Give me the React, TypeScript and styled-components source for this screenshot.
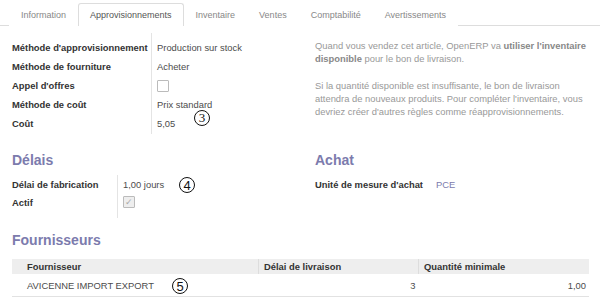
import React from "react";
import styled, { createGlobalStyle } from "styled-components";

const Global = createGlobalStyle`
  body {
    margin: 0;
    background: #fff;
    font-family: "Liberation Sans", Arial, sans-serif;
    font-size: 9.4px;
    color: #4c4c4c;
  }
`;

const Page = styled.div`
  width: 600px;
  height: 306px;
  overflow: hidden;
`;

const TabBar = styled.div`
  display: flex;
  align-items: flex-end;
  height: 25px;
  padding-left: 9px;
  border-bottom: 1px solid #ddd;
  box-sizing: content-box;
`;

const Tab = styled.div<{ active?: boolean }>`
  height: 23px;
  line-height: 22px;
  padding: 0 11px;
  font-size: 9px;
  color: ${p => (p.active ? "#555" : "#888")};
  background: #fff;
  border: 1px solid ${p => (p.active ? "#ddd" : "transparent")};
  border-bottom: none;
  border-radius: 3px 3px 0 0;
  margin-bottom: -1px;
  box-sizing: border-box;
`;

const Body = styled.div`
  padding: 0 11px 0 12px;
`;

const Columns = styled.div<{ top: number }>`
  display: grid;
  grid-template-columns: 303px 1fr;
  padding-top: ${p => p.top}px;
`;

const FieldTable = styled.div<{ labelWidth: number; rowHeight: number; top?: number }>`
  display: grid;
  grid-template-columns: ${p => p.labelWidth}px 1fr;
  grid-auto-rows: ${p => p.rowHeight}px;
  margin-top: ${p => p.top || 0}px;
  position: relative;
`;

const Sep = styled.div<{ left: number; top: number; bottom: number }>`
  position: absolute;
  left: ${p => p.left}px;
  top: ${p => p.top}px;
  bottom: ${p => p.bottom}px;
  border-left: 1px solid #e4e4e4;
`;

const Label = styled.div`
  font-weight: bold;
  color: #333;
  display: flex;
  align-items: center;
  white-space: nowrap;
`;

const Value = styled.div<{ accent?: boolean }>`
  display: flex;
  align-items: center;
  padding-left: 6px;
  color: ${p => (p.accent ? "#7c7bad" : "#4c4c4c")};
  position: relative;
  white-space: nowrap;
`;

const Check = styled.span<{ disabled?: boolean }>`
  width: 10px;
  height: 10px;
  border: 1px solid #bbb;
  border-radius: 1px;
  background: ${p => (p.disabled ? "#eee" : "#fff")};
  display: inline-flex;
  align-items: center;
  justify-content: center;
  color: #aaa;
  font-size: 9px;
  line-height: 1;
`;

const Help = styled.div`
  color: #999;
  line-height: 13px;
  margin-top: 1px;
  white-space: nowrap;
  p {
    margin: 0 0 14px;
  }
  b {
    color: #888;
  }
`;

const Heading = styled.h2<{ top?: number }>`
  margin: ${p => p.top || 0}px 0 0;
  font-size: 14px;
  font-weight: bold;
  color: #7c7bad;
  line-height: 20px;
`;

const Badge = styled.span<{ x: number; y: number; serif?: boolean }>`
  position: absolute;
  left: ${p => p.x}px;
  top: ${p => p.y}px;
  width: 16px;
  height: 16px;
  border: 1.2px solid #111;
  border-radius: 50%;
  display: flex;
  align-items: center;
  justify-content: center;
  font-family: ${p => (p.serif ? '"Liberation Serif", serif' : '"Liberation Sans", sans-serif')};
  font-size: 13px;
  color: #111;
  box-sizing: border-box;
`;

const Table = styled.table`
  width: 577px;
  border-collapse: collapse;
  margin-top: 9px;
  th {
    background: #eee;
    color: #333;
    font-weight: bold;
    text-align: left;
    height: 15px;
    padding: 0 5px;
    border-left: 1px solid #ddd;
  }
  th:first-child {
    border-left: none;
    padding-left: 15px;
  }
  td {
    height: 22px;
    padding: 0 3px;
    border-bottom: 1px solid #e2e2e2;
    color: #4c4c4c;
  }
  td:first-child {
    padding-left: 15px;
    position: relative;
  }
`;

const Num = styled.td`
  text-align: right;
`;

export default function App() {
  return (
    <Page>
      <Global />
      <TabBar>
        <Tab>Information</Tab>
        <Tab active>Approvisionnements</Tab>
        <Tab>Inventaire</Tab>
        <Tab>Ventes</Tab>
        <Tab>Comptabilité</Tab>
        <Tab>Avertissements</Tab>
      </TabBar>
      <Body>
        <Columns top={12}>
          <FieldTable labelWidth={139} rowHeight={19}>
            <Sep left={139} top={-5} bottom={-1} />
            <Label>Méthode d'approvisionnement</Label>
            <Value>Production sur stock</Value>
            <Label>Méthode de fourniture</Label>
            <Value>Acheter</Value>
            <Label>Appel d'offres</Label>
            <Value><Check /></Value>
            <Label>Méthode de coût</Label>
            <Value>Prix standard</Value>
            <Label>Coût</Label>
            <Value>
              5,05
              <Badge x={43} y={-4} serif>3</Badge>
            </Value>
          </FieldTable>
          <Help>
            <p>
              Quand vous vendez cet article, OpenERP va <b>utiliser l'inventaire</b>
              <br />
              <b>disponible</b> pour le bon de livraison.
            </p>
            <p>
              Si la quantité disponible est insuffisante, le bon de livraison
              <br />
              attendra de nouveaux produits. Pour compléter l'inventaire, vous
              <br />
              devriez créer d'autres règles comme réapprovisionnements.
            </p>
          </Help>
        </Columns>

        <Columns top={0}>
          <div>
            <Heading top={17}>Délais</Heading>
            <FieldTable labelWidth={105} rowHeight={18} top={5}>
              <Sep left={105} top={0} bottom={-7} />
              <Label>Délai de fabrication</Label>
              <Value>
                1,00 jours
                <Badge x={62} y={2}>4</Badge>
              </Value>
              <Label>Actif</Label>
              <Value><Check disabled>✓</Check></Value>
            </FieldTable>
          </div>
          <div>
            <Heading top={17}>Achat</Heading>
            <FieldTable labelWidth={115} rowHeight={18} top={5}>
              <Label>Unité de mesure d'achat</Label>
              <Value accent>PCE</Value>
            </FieldTable>
          </div>
        </Columns>

        <Heading top={19}>Fournisseurs</Heading>
        <Table>
          <thead>
            <tr>
              <th style={{ width: 226 }}>Fournisseur</th>
              <th style={{ width: 149 }}>Délai de livraison</th>
              <th>Quantité minimale</th>
            </tr>
          </thead>
          <tbody>
            <tr>
              <td>
                AVICENNE IMPORT EXPORT
                <Badge x={160} y={4}>5</Badge>
              </td>
              <Num>3</Num>
              <Num>1,00</Num>
            </tr>
          </tbody>
        </Table>
      </Body>
    </Page>
  );
}
